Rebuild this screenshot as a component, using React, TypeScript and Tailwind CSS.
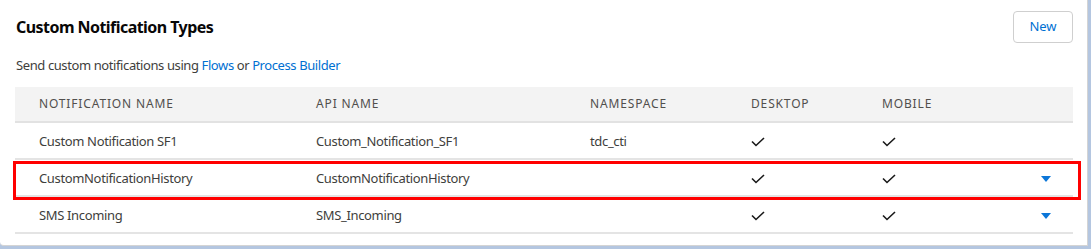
import type { ReactNode } from 'react';

interface NotificationType {
  name: string;
  apiName: string;
  namespace?: string;
  desktop: boolean;
  mobile: boolean;
  hasMenu: boolean;
}

const rows: NotificationType[] = [
  { name: 'Custom Notification SF1', apiName: 'Custom_Notification_SF1', namespace: 'tdc_cti', desktop: true, mobile: true, hasMenu: false },
  { name: 'CustomNotificationHistory', apiName: 'CustomNotificationHistory', desktop: true, mobile: true, hasMenu: true },
  { name: 'SMS Incoming', apiName: 'SMS_Incoming', desktop: true, mobile: true, hasMenu: true },
];

const gridCols = 'grid grid-cols-[277px_274px_161px_131px_1fr_40px] items-center pl-6';

function Check() {
  return (
    <svg width="14" height="10" viewBox="0 0 14 10" className="block" aria-hidden>
      <polyline points="1,4.5 5,8.5 13,1" fill="none" stroke="#181818" strokeWidth="1.6" />
    </svg>
  );
}

function Caret() {
  return (
    <svg width="10" height="6" viewBox="0 0 10 6" className="block" aria-hidden>
      <polygon points="0,0 10,0 5,6" fill="#0b76d8" />
    </svg>
  );
}

function HeaderCell({ children }: { children: ReactNode }) {
  return <div className="text-[12px] uppercase tracking-[0.85px] text-[#514f4d]">{children}</div>;
}

export default function App() {
  return (
    <div className="h-[249px] w-[1091px] bg-[#b4c6e0] font-['Noto_Sans',sans-serif]">
      <div className="relative h-[246px] w-[1088px] rounded-bl-[4px] border-r border-b border-[#d4d4d4] bg-white">
        <div className="flex items-center justify-between pt-[11px] pr-[14px] pl-4">
          <h1 className="text-[16px] font-bold tracking-[-0.55px] text-[#080707]">Custom Notification Types</h1>
          <button
            type="button"
            className="h-8 w-[60px] rounded-[4px] border border-[#cfcfcf] bg-white text-[13px] text-[#0070d2]"
          >
            New
          </button>
        </div>

        <p className="mt-[13px] pl-4 text-[13px] tracking-[-0.4px] text-[#3e3e3c]">
          Send custom notifications using <span className="text-[#0070d2]">Flows</span> or{' '}
          <span className="text-[#0070d2]">Process Builder</span>
        </p>

        <div className="mt-[11px] ml-[15px] w-[1058px]">
          <div className={`${gridCols} h-9 border-b-2 border-[#e2e2e2] bg-[#f3f3f3]`}>
            <HeaderCell>Notification Name</HeaderCell>
            <HeaderCell>API Name</HeaderCell>
            <HeaderCell>Namespace</HeaderCell>
            <HeaderCell>Desktop</HeaderCell>
            <HeaderCell>Mobile</HeaderCell>
            <div />
          </div>
          {rows.map((row) => (
            <div
              key={row.apiName}
              className={`${gridCols} h-[37px] border-b-2 border-[#e4e4e4] pt-1 text-[13px] tracking-[-0.35px] text-[#3e3e3c]`}
            >
              <div>{row.name}</div>
              <div>{row.apiName}</div>
              <div>{row.namespace ?? ''}</div>
              <div>{row.desktop ? <Check /> : null}</div>
              <div>{row.mobile ? <Check /> : null}</div>
              <div className="pl-2">{row.hasMenu ? <Caret /> : null}</div>
            </div>
          ))}
        </div>

        {/* annotation box around the second row */}
        <div className="pointer-events-none absolute top-[161px] left-[13px] h-[39px] w-[1068px] border-[3px] border-[#ff0000]" />
      </div>
    </div>
  );
}
